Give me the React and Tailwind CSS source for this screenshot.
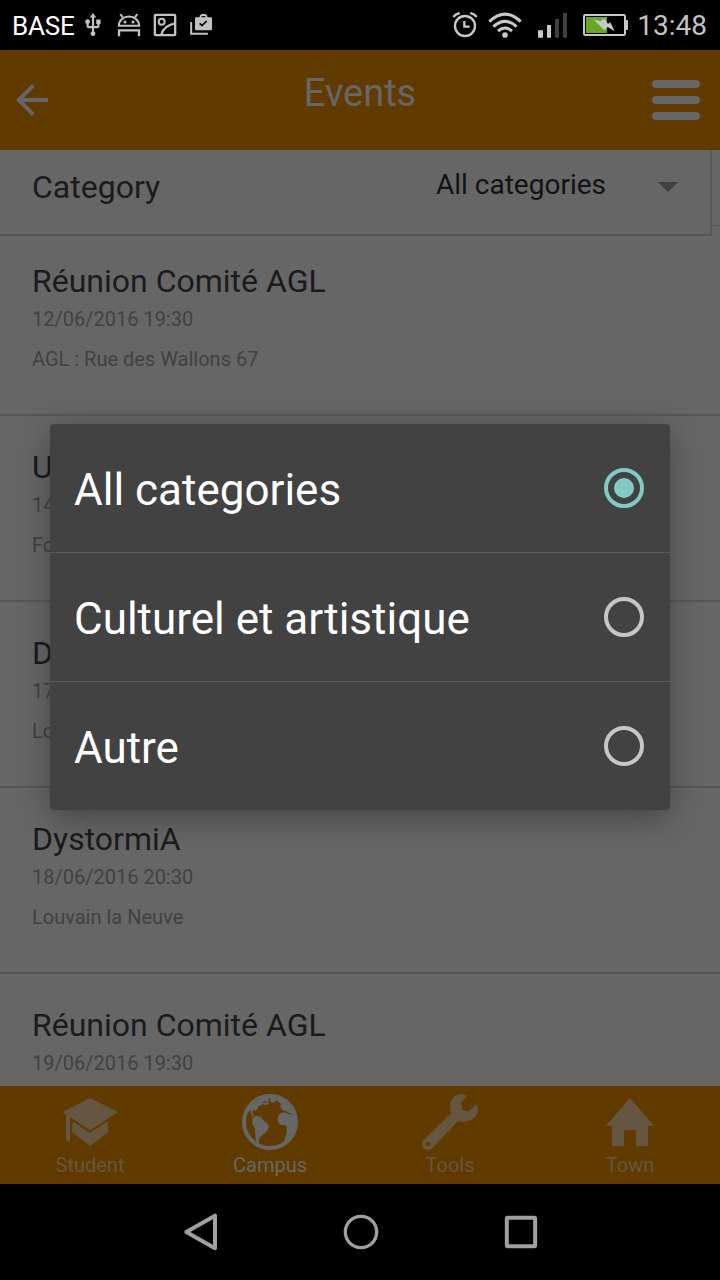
import { MdArrowBack, MdUsb } from "react-icons/md";

const events = [
  { title: "Réunion Comité AGL", date: "12/06/2016 19:30", place: "AGL : Rue des Wallons 67" },
  { title: "U", date: "14", place: "Fo" },
  { title: "D", date: "17", place: "Lo" },
  { title: "DystormiA", date: "18/06/2016 20:30", place: "Louvain la Neuve" },
  { title: "Réunion Comité AGL", date: "19/06/2016 19:30", place: "" },
];

function AndroidIcon() {
  return (
    <svg className="ml-[11px] h-6 w-6" viewBox="351 39 72 72" fill="none">
      <path d="M356.500 77.500a30.500 28 0 0 1 61 0z" stroke="#c2c2c2" strokeWidth="6" />
      <path d="M361 42l7 10M412 42l-7 10" stroke="#c2c2c2" strokeWidth="6" />
      <circle cx="375" cy="66" r="4.500" fill="#c2c2c2" />
      <circle cx="399" cy="66" r="4.500" fill="#c2c2c2" />
      <path d="M357 109V91h60v18" stroke="#c2c2c2" strokeWidth="7" />
    </svg>
  );
}

function PictureIcon() {
  return (
    <svg className="ml-3 h-6 w-6" viewBox="459 39 72 72" fill="none" stroke="#c2c2c2" strokeWidth="7">
      <rect x="464.500" y="44.500" width="61" height="61" rx="2" />
      <circle cx="485" cy="65" r="9" strokeWidth="6" />
      <path d="M484 104C488 86 504 74 526 70" strokeWidth="7" />
    </svg>
  );
}

function WorkIcon() {
  return (
    <svg className="ml-3 h-6 w-6" viewBox="567 39 72 72" fill="none">
      <path d="M573.500 66v35.500h50" stroke="#c2c2c2" strokeWidth="6" />
      <path d="M602 54v-6l4-3h9l4 3v6" stroke="#c2c2c2" strokeWidth="6" />
      <rect x="585" y="52" width="51" height="39" rx="3" fill="#c2c2c2" />
      <path d="M599 70l7 7 14-14" stroke="#000" strokeWidth="5" />
    </svg>
  );
}

function StatusBar() {
  return (
    <div className="flex h-[50px] items-center bg-black pr-[13px] pl-[12px]">
      <span className="w-[68px] text-[26px] leading-[50px] tracking-[-0.2px] text-white">
        <span className="block pt-[2px]">BASE</span>
      </span>
      <MdUsb className="h-[26px] w-[26px] text-[#c2c2c2]" />
      <AndroidIcon />
      <PictureIcon />
      <WorkIcon />
      <svg className="ml-auto h-[50px] w-[178px]" viewBox="66 0 534 150" fill="none">
        <circle cx="105" cy="78" r="30" stroke="#c8c8c8" strokeWidth="7" />
        <path d="M70 51q6-9 19-12M140 51q-6-9-19-12" stroke="#c8c8c8" strokeWidth="7" />
        <path d="M103 63v17h16" stroke="#c8c8c8" strokeWidth="7" />
        <path d="M178 65Q225 20 272 65M190 80Q225 48 260 80M204 93Q225 75 246 93" stroke="#c8c8c8" strokeWidth="9" />
        <circle cx="225" cy="105" r="8.500" fill="#c8c8c8" />
        <path d="M324 91h15v22h-15zM351 75h12v38h-12z" fill="#c8c8c8" />
        <path d="M375 57h12v56h-12zM399 39h12v74h-12z" fill="#404040" />
        <rect x="462" y="45" width="123" height="60" rx="4" stroke="#c8c8c8" strokeWidth="6" />
        <path d="M587 60h4q3 0 3 3v24q0 3-3 3h-4z" fill="#c8c8c8" />
        <path d="M468 51h63v48h-63z" fill="#69a626" />
        <path d="M490 58L512 64 522 55 534 71 541 67 554 94 533 81 523 91z" fill="#c8c8c8" />
      </svg>
      <span className="ml-[7px] pt-[2px] text-[28px] leading-[50px] text-[#c2c2c2]">13:48</span>
    </div>
  );
}

function Header() {
  return (
    <header className="grid h-[100px] grid-cols-3 bg-[#613a00]">
      <MdArrowBack className="mt-[26px] ml-2 h-12 w-12 text-[#666]" />
      <h1 className="text-center text-[38px] leading-[86px] text-[#666]">Events</h1>
      <div className="mt-[30px] mr-5 flex flex-col gap-2 justify-self-end">
        <div className="h-2 w-12 rounded bg-[#666]" />
        <div className="h-2 w-12 rounded bg-[#666]" />
        <div className="h-2 w-12 rounded bg-[#666]" />
      </div>
    </header>
  );
}

function CategoryBar() {
  return (
    <div className="flex h-[86px]">
      <div className="flex w-[712px] border-r-2 border-b-2 border-[#575757] pl-8">
        <span className="text-[32px] leading-[74px] text-[#1b1b1b]">Category</span>
        <span className="ml-auto text-[28px] leading-[69px] text-[#131313]">All categories</span>
        <svg className="mt-8 mr-8 ml-[52px] h-[10px] w-5" viewBox="0 0 20 10">
          <path d="M0 0h20L10 10z" fill="#414141" />
        </svg>
      </div>
      <div className="h-[76px] w-2 border-b border-[#575757]" />
    </div>
  );
}

function EventRow({ event, first }) {
  return (
    <div className={`${first ? "h-[180px] pt-[26px]" : "h-[186px] pt-8"} shrink-0 border-b-2 border-[#575757] pl-8`}>
      <div className="text-[32px] leading-[38px] text-[#1b1b1b]">{event.title}</div>
      <div className="text-[20px] leading-[38px] text-[#414141]">{event.date}</div>
      <div className="text-[20px] leading-[42px] text-[#414141]">{event.place}</div>
    </div>
  );
}

const tabs = [
  {
    label: "Student",
    icon: (
      <svg className="h-[60px] w-[60px]" viewBox="180 36 180 180" fill="currentColor">
        <path d="M187 96l83-42 84 42-84 55zM198 100l12 8v79l-12-6zM218 124l52 34 53-34 2 32-55 42-54-42z" />
      </svg>
    ),
  },
  {
    label: "Campus",
    active: true,
    icon: (
      <svg className="h-[60px] w-[60px]" viewBox="720 36 180 180" fill="currentColor">
        <circle cx="810" cy="126" r="78" fill="none" stroke="currentColor" strokeWidth="12" />
        <path d="M757 113L769 107 783 111 790 121 807 136 803 150 796 158 785 167 777 178 777 192 768 186 765 158 765 145 757 133z" />
        <path d="M740 104L744 84 762 62 784 50 806 46 810 54 805 58 806 72 801 75 792 74 789 70 800 67 803 62 788 66 790 72 782 76 774 80 773 88 765 92 758 90 757 96 763 111 757 108 750 90z" />
        <path d="M808 46L834 48 860 62 878 84 884 104 876 102 866 98 856 92 850 94 844 86 840 78 844 72 836 66 830 60 824 66 816 70 811 64z" />
        <path d="M838 103L848 97 860 99 864 103 876 103 884 112 886 128 882 150 870 168 858 180 852 182 856 170 860 158 860 140 856 135 840 134 833 124 834 112z" />
      </svg>
    ),
  },
  {
    label: "Tools",
    icon: (
      <svg className="h-[60px] w-[60px]" viewBox="180 36 180 180" fill="currentColor">
        <path fillRule="evenodd" d="M322 48l-19 19 3 23 20 4 22-21q6 4 6 15c-1 26-25 43-60 36l-77 80q-5 6-13 6c-15 0-24-18-13-31l83-79q-4-8-4-18c0-34 27-47 52-34zM211 192a7 7 0 1 0-14 0 7 7 0 1 0 14 0z" />
      </svg>
    ),
  },
  {
    label: "Town",
    icon: (
      <svg className="h-[60px] w-[60px]" viewBox="720 36 180 180" fill="currentColor">
        <path d="M810 54l72 83h-18v61h-36v-48h-36v48h-36v-61h-18z" />
      </svg>
    ),
  },
];

function TabBar() {
  return (
    <nav className="grid h-[98px] shrink-0 grid-cols-4 bg-[#613a00]">
      {tabs.map((t) => (
        <div key={t.label} className={`flex flex-col items-center pt-[6px] ${t.active ? "text-[#666]" : "text-[#645640]"}`}>
          {t.icon}
          <span className="text-[20px] leading-[26px]">{t.label}</span>
        </div>
      ))}
    </nav>
  );
}

function SystemNav() {
  return (
    <div className="flex h-24 shrink-0 justify-center bg-black">
      <svg className="h-24 w-[360px]" viewBox="540 312 1080 288" fill="none" stroke="#a0a0a0">
        <path d="M559 456l86-49v98z" strokeWidth="12" strokeLinejoin="round" />
        <circle cx="1083" cy="456" r="47" strokeWidth="10" />
        <rect x="1520.500" y="413.500" width="85" height="85" rx="3" strokeWidth="12" />
      </svg>
    </div>
  );
}

const options = [
  { label: "All categories", selected: true },
  { label: "Culturel et artistique" },
  { label: "Autre" },
];

function CategoryDialog() {
  return (
    <div className="absolute top-[424px] left-[50px] w-[620px] divide-y divide-[#5d5d5d] rounded-[4px] bg-[#424242] shadow-[0_8px_32px_rgba(0,0,0,0.32)]">
      {options.map((o) => (
        <div key={o.label} className="flex h-[129px] items-center justify-between pr-[26px] pl-6 last:h-32">
          <span className="pt-1 text-[44px] leading-[60px] text-white">{o.label}</span>
          <div className={`flex h-10 w-10 items-center justify-center rounded-full border-4 ${o.selected ? "border-[#80cbc4]" : "border-[#c6c6c6]"}`}>
            {o.selected && <div className="h-5 w-5 rounded-full bg-[#80cbc4]" />}
          </div>
        </div>
      ))}
    </div>
  );
}

export default function App() {
  return (
    <div className="relative flex h-[1280px] w-[720px] flex-col overflow-hidden bg-[#666] font-['Roboto',sans-serif]">
      <StatusBar />
      <Header />
      <CategoryBar />
      <main className="flex min-h-0 flex-1 flex-col overflow-hidden">
        {events.map((e, i) => (
          <EventRow key={e.date} event={e} first={i === 0} />
        ))}
      </main>
      <TabBar />
      <SystemNav />
      <CategoryDialog />
    </div>
  );
}
